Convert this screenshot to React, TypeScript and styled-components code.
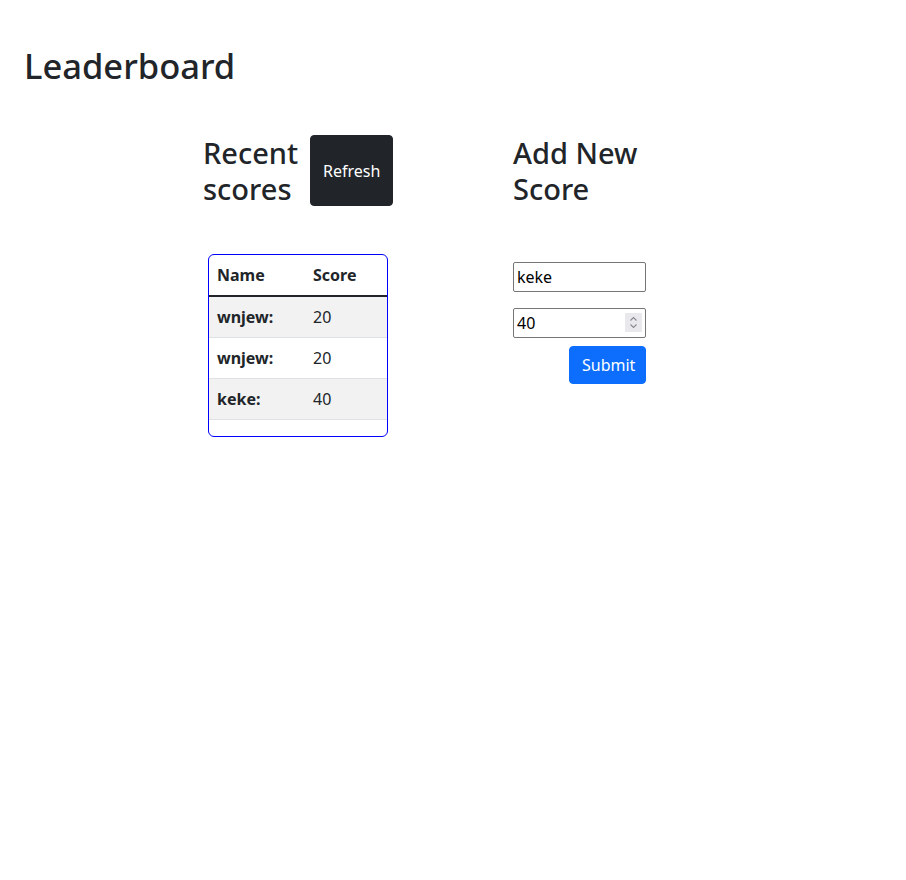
import React from "react";
import styled, { createGlobalStyle } from "styled-components";

const Global = createGlobalStyle`
  html, body { margin: 0; padding: 0; background: #fff; }
  body {
    font-family: "Noto Sans", "DejaVu Sans", sans-serif;
    color: #212529;
    font-size: 16px;
    line-height: 1.5;
  }
  * { box-sizing: border-box; }
`;

const Page = styled.div`
  padding: 45px 24px 0 24px;
`;

const Title = styled.h1`
  margin: 0 0 49px 0;
  font-size: 34.5px;
  font-weight: 500;
  line-height: 1.2;
`;

const Row = styled.div`
  display: flex;
  align-items: flex-start;
  margin-left: 179px;
  gap: 120px;
`;

const Column = styled.div<{ $width: number }>`
  width: ${(p) => p.$width}px;
  display: flex;
  flex-direction: column;
`;

const HeaderRow = styled.div`
  display: flex;
  align-items: stretch;
  gap: 10px;
`;

const Heading = styled.h2<{ $width: number }>`
  margin: 0;
  width: ${(p) => p.$width}px;
  font-size: 29px;
  font-weight: 500;
  line-height: 35.5px;
`;

const DarkButton = styled.button`
  font-family: inherit;
  font-size: 16px;
  line-height: 1.5;
  color: #fff;
  background: #212529;
  border: 1px solid #212529;
  border-radius: 4px;
  padding: 6px 12px;
  width: 83px;
`;

const TableBox = styled.div`
  margin: 48px 0 0 5px;
  width: 180px;
  border: 1px solid #0000ff;
  border-radius: 6px;
  overflow: hidden;
`;

const Table = styled.table`
  width: 100%;
  border-collapse: collapse;
  margin-bottom: 16px;
`;

const HeadCell = styled.th<{ $w?: number }>`
  text-align: left;
  font-weight: 700;
  padding: 8px;
  border-bottom: 2px solid #212529;
  ${(p) => (p.$w ? `width: ${p.$w}px;` : "")}
`;

const BodyRow = styled.tr<{ $striped: boolean }>`
  background: ${(p) => (p.$striped ? "#f2f2f2" : "#fff")};
`;

const RowHead = styled.th`
  text-align: left;
  font-weight: 700;
  padding: 8px;
  border-bottom: 1px solid #dee2e6;
`;

const Cell = styled.td`
  padding: 8px;
  border-bottom: 1px solid #dee2e6;
`;

const Form = styled.form`
  margin-top: 56px;
  display: flex;
  flex-direction: column;
  align-items: stretch;
`;

const Field = styled.div`
  position: relative;
  width: 133px;
  height: 30px;
  margin-bottom: 16px;
`;

const Input = styled.input`
  display: block;
  font-family: inherit;
  font-size: 16px;
  color: #000;
  height: 30px;
  width: 133px;
  border: 1px solid #767676;
  border-radius: 2px;
  padding: 1px 3px;
  -moz-appearance: textfield;
  &::-webkit-inner-spin-button,
  &::-webkit-outer-spin-button {
    -webkit-appearance: none;
    margin: 0;
  }
`;

const Spinner = styled.span`
  position: absolute;
  right: 4px;
  top: 5px;
  width: 17px;
  height: 19px;
  background: #e9e9ed;
  border-radius: 1px;
  display: flex;
  align-items: center;
  justify-content: center;
  pointer-events: none;
`;

const SubmitRow = styled.div`
  display: flex;
  justify-content: flex-end;
  margin-top: -8px;
`;

const PrimaryButton = styled.button`
  font-family: inherit;
  font-size: 16px;
  line-height: 1.5;
  color: #fff;
  background: #0d6efd;
  border: 1px solid #0d6efd;
  border-radius: 4px;
  padding: 6px 12px;
  width: 77px;
`;

const scores = [
  { name: "wnjew:", score: 20 },
  { name: "wnjew:", score: 20 },
  { name: "keke:", score: 40 },
];

export default function App() {
  return (
    <Page>
      <Global />
      <Title>Leaderboard</Title>
      <Row>
        <Column $width={190}>
          <HeaderRow>
            <Heading $width={97}>Recent scores</Heading>
            <DarkButton>Refresh</DarkButton>
          </HeaderRow>
          <TableBox>
            <Table>
              <thead>
                <tr>
                  <HeadCell $w={96}>Name</HeadCell>
                  <HeadCell>Score</HeadCell>
                </tr>
              </thead>
              <tbody>
                {scores.map((s, i) => (
                  <BodyRow key={i} $striped={i % 2 === 0}>
                    <RowHead>{s.name}</RowHead>
                    <Cell>{s.score}</Cell>
                  </BodyRow>
                ))}
              </tbody>
            </Table>
          </TableBox>
        </Column>
        <Column $width={133}>
          <Heading $width={133}>Add New Score</Heading>
          <Form onSubmit={(e) => e.preventDefault()}>
            <Field>
              <Input type="text" defaultValue="keke" />
            </Field>
            <Field>
              <Input type="number" defaultValue={40} />
              <Spinner>
                <svg width="9" height="13" viewBox="0 0 9 13" fill="none" stroke="#8a8a8f" strokeWidth="1.1">
                  <polyline points="1.5,4.5 4.5,1.5 7.5,4.5" />
                  <polyline points="1.5,8.5 4.5,11.5 7.5,8.5" />
                </svg>
              </Spinner>
            </Field>
            <SubmitRow>
              <PrimaryButton type="submit">Submit</PrimaryButton>
            </SubmitRow>
          </Form>
        </Column>
      </Row>
    </Page>
  );
}
